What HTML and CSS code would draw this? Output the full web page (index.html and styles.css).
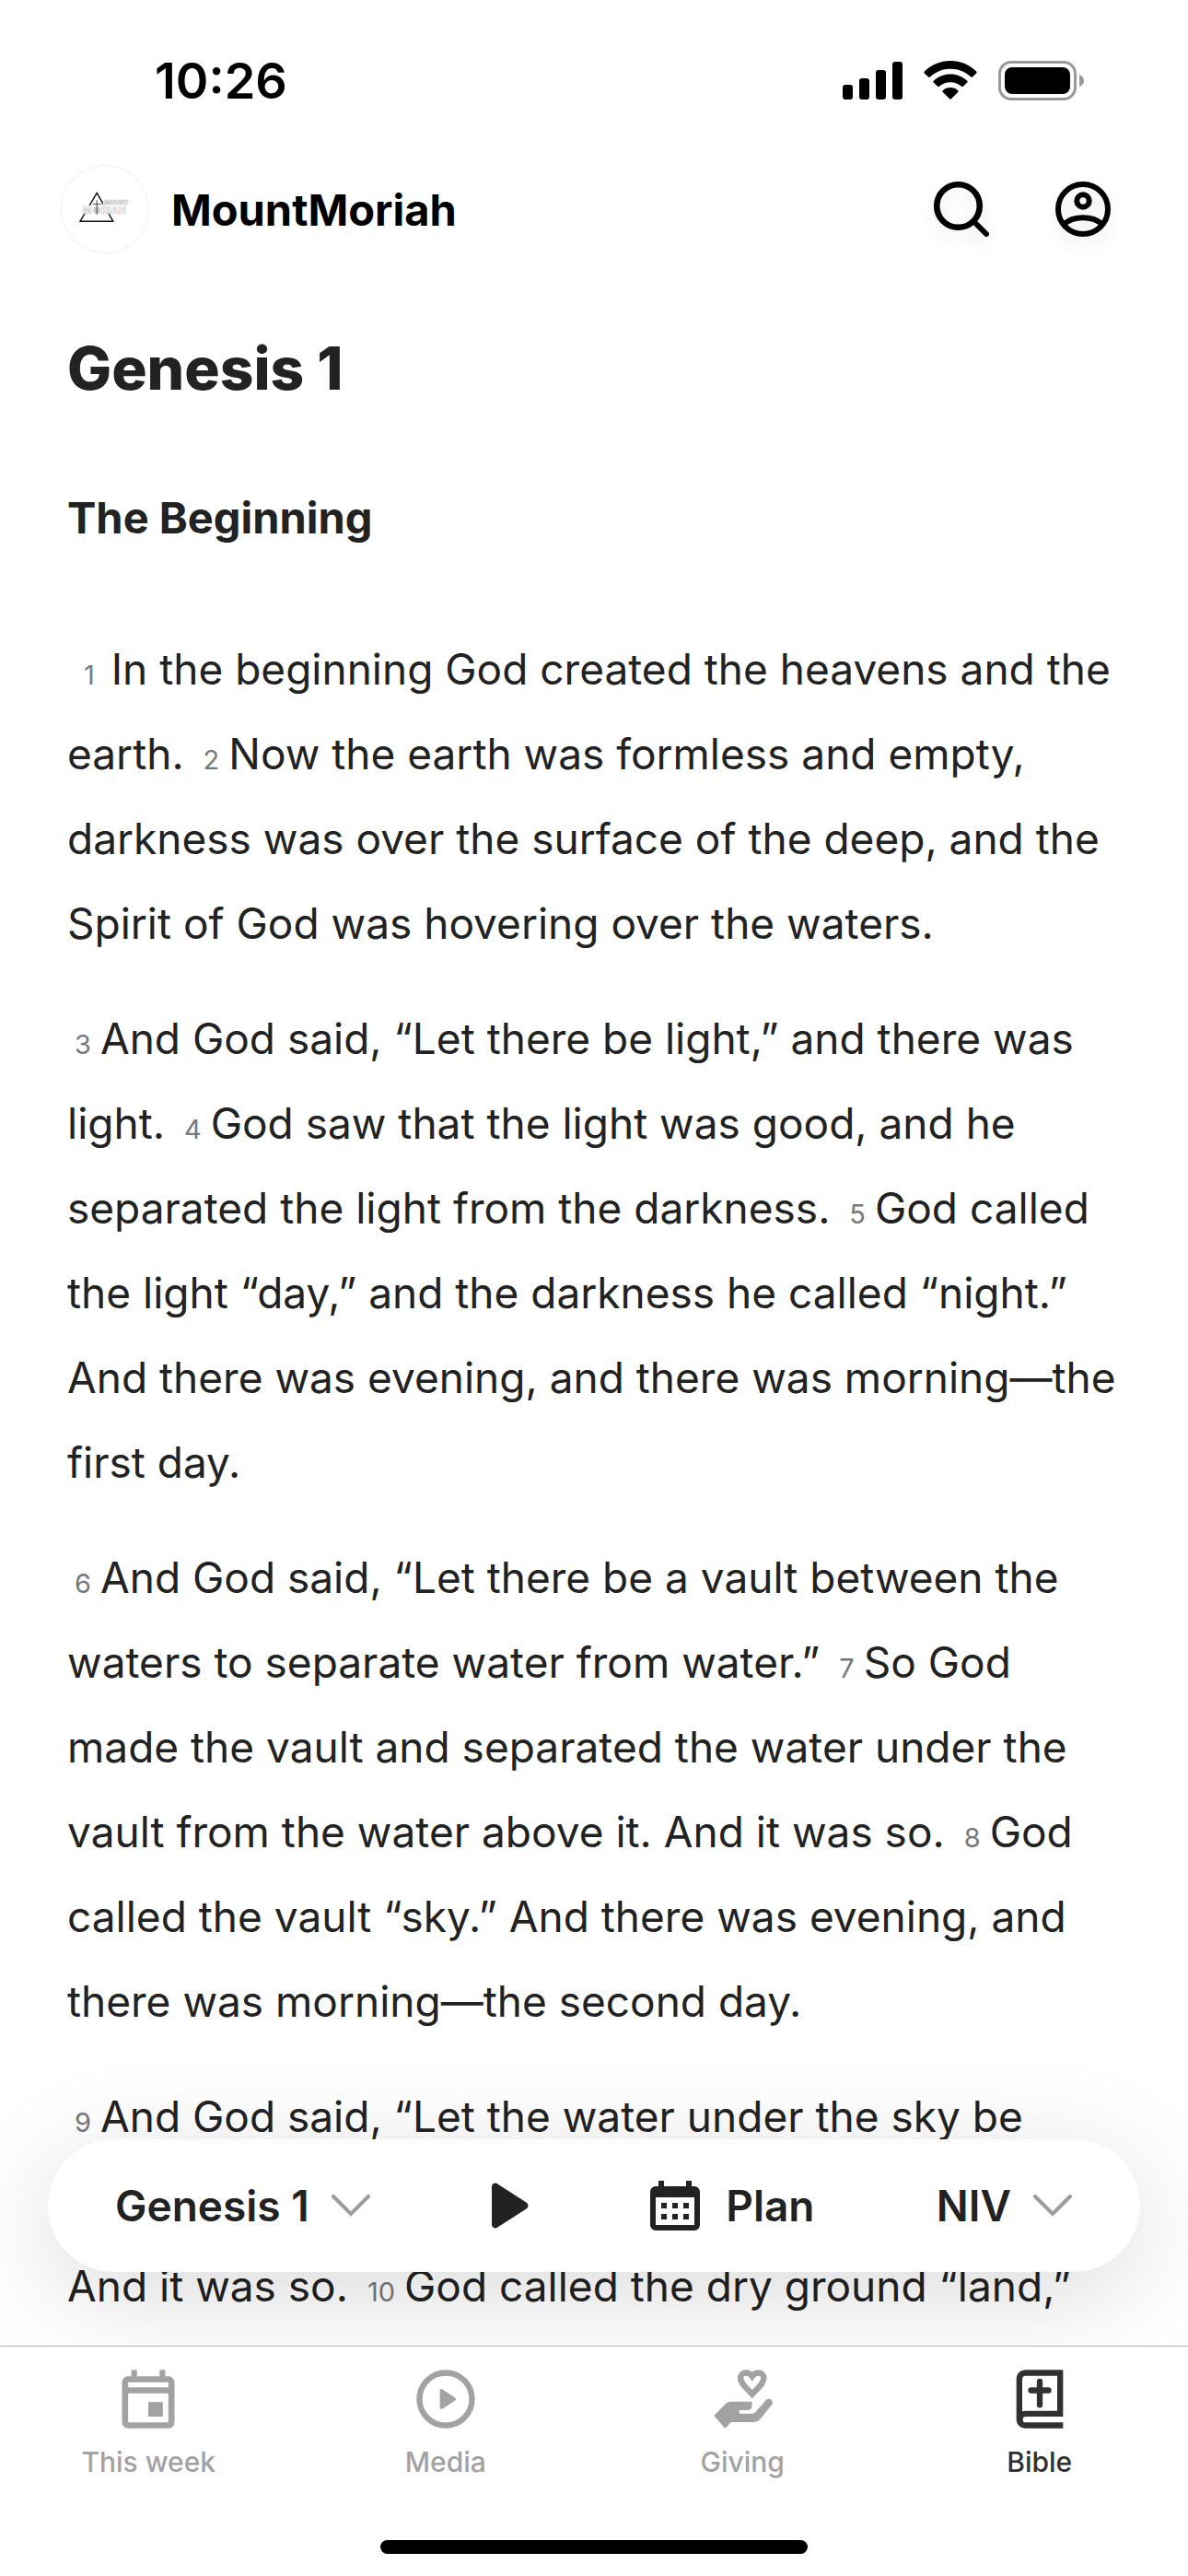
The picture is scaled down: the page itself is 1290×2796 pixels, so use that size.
FILE: index.html
```html
<!DOCTYPE html>
<html lang="en">
  <head>
    <meta charset="UTF-8" />
    <meta name="viewport" content="width=device-width, initial-scale=1.0" />
    <title>MountMoriah - Genesis 1</title>
    <link rel="stylesheet" href="styles.css">
  </head>
  <body>
    <div class="status-bar">
      <span class="time">10:26</span>
      <div class="status-icons">
        <svg width="65" height="42" viewBox="0 0 65 42">
          <rect x="0" y="26" width="11" height="16" rx="3" />
          <rect x="18" y="19" width="11" height="23" rx="3" />
          <rect x="36" y="10" width="11" height="32" rx="3" />
          <rect x="54" y="1" width="11" height="41" rx="3" />
        </svg>
        <svg width="58" height="42" viewBox="0 0 58 42">
          <path d="M29 0C18 0 8 4.500 .8 11.400q-.9 1 0 2L5 17.500q.9.800 1.800 0C12.700 12 20.500 8.800 29 8.800s16.300 3.200 22.200 8.700q.9.800 1.800 0l4.200-4.100q.9-1 0-2C50 4.500 40 0 29 0z" />
          <path d="M29 14.500c-7 0-13.400 2.700-18.200 7.200q-.9.900 0 1.900l4.300 4.200q.9.800 1.800 0C20.100 25 24.300 23.200 29 23.200S37.900 25 41.100 27.800q.9.800 1.800 0l4.300-4.200q.9-1 0-1.900C42.400 17.200 36 14.500 29 14.500z" />
          <path d="M29 29c-3.200 0-6 1.200-8.200 3.200q-.9.900 0 1.800l7.300 7.300q.9.800 1.800 0l7.300-7.300q.9-.9 0-1.800C35 30.200 32.200 29 29 29z" />
        </svg>
        <svg width="94" height="43" viewBox="0 0 94 43">
          <rect x="1.500" y="1.500" width="82" height="40" rx="12.500" fill="none" stroke="#999" stroke-width="3" />
          <rect x="7" y="7" width="71" height="29" rx="8" />
          <path d="M88 15c3 1 5 3.500 5 6.500s-2 5.500-5 6.500z" fill="#999" />
        </svg>
      </div>
    </div>

    <header class="header">
      <a href="#" class="brand">
        <svg class="logo" viewBox="0 0 96 96">
          <path d="M39 30 20.500 61.500h36.500z" fill="none" stroke="#111" stroke-width="1.500" />
          <path d="M24 44h54v9H24zM46 38h32v6H46z" fill="#fff" />
          <circle cx="39" cy="49" r="4" fill="#ccc" />
          <path d="M39 38v16M34.500 42.500h9" stroke="#444" stroke-width="1" />
          <text x="47" y="43" font-size="7" class="logo-text">MOUNT</text>
          <text x="23" y="53" font-size="11" class="logo-text">M</text>
          <text x="44" y="53" font-size="11" class="logo-text">RIAH</text>
        </svg>
        <span class="brand-name">MountMoriah</span>
      </a>
      <div class="header-actions">
        <button class="icon-button" aria-label="Search">
          <svg viewBox="0 0 60 60">
            <circle cx="26.500" cy="26.500" r="23.300" stroke-width="6.600" />
            <path d="M44 44l13 13" />
          </svg>
        </button>
        <button class="icon-button" aria-label="Profile">
          <svg viewBox="0 0 60 60">
            <circle cx="30" cy="30" r="27" />
            <circle cx="30" cy="21" r="6.700" />
            <path d="M9.500 46C20 37 40 37 50.500 46" />
          </svg>
        </button>
      </div>
    </header>

    <div class="reader">
      <main class="chapter">
        <h1>Genesis 1</h1>
        <h2>The Beginning</h2>
        <p>&nbsp;<sub class="verse first">1</sub>&nbsp;In the beginning God created the heavens and the earth. <sub class="verse">2</sub>Now the earth was formless and empty, darkness was over the surface of the deep, and the Spirit of God was hovering over the waters.</p>
        <p><sub class="verse">3</sub>And God said, “Let there be light,” and there was light. <sub class="verse">4</sub>God saw that the light was good, and he separated the light from the darkness. <sub class="verse">5</sub>God called the light “day,” and the darkness he called “night.” And there was evening, and there was morning—the first day.</p>
        <p><sub class="verse">6</sub>And God said, “Let there be a vault between the waters to separate water from water.” <sub class="verse">7</sub>So God made the vault and separated the water under the vault from the water above it. And it was so. <sub class="verse">8</sub>God called the vault “sky.” And there was evening, and there was morning—the second day.</p>
        <p><sub class="verse">9</sub>And God said, “Let the water under the sky be gathered to one place, and let dry ground appear.” And it was so. <sub class="verse">10</sub>God called the dry ground “land,”</p>
      </main>

      <div class="toolbar">
        <button class="tool">
          Genesis 1
          <svg class="chevron" viewBox="0 0 42 24"><path d="M2 2l19 19L40 2" /></svg>
        </button>
        <button class="tool" aria-label="Play">
          <svg width="40" height="50" viewBox="0 0 40 50">
            <path d="M0 4.500C0 1.200 3.600-.6 6.300 1.400L37.500 21.500c2.600 1.800 2.600 5.200 0 7L6.300 48.600C3.600 50.600 0 48.800 0 45.500z" />
          </svg>
        </button>
        <button class="tool plan">
          <svg width="54" height="54" viewBox="0 0 54 54">
            <path fill-rule="evenodd" d="M9 0h6v6h24V0h6v6h3a6 6 0 0 1 6 6v36a6 6 0 0 1-6 6H6a6 6 0 0 1-6-6V12a6 6 0 0 1 6-6h3zM6 18v30h42V18z" />
            <path d="M12 24h6v6h-6zM24 24h6v6h-6zM36 24h6v6h-6zM12 36h6v6h-6zM24 36h6v6h-6zM36 36h6v6h-6z" />
          </svg>
          Plan
        </button>
        <button class="tool">
          NIV
          <svg class="chevron" viewBox="0 0 42 24"><path d="M2 2l19 19L40 2" /></svg>
        </button>
      </div>
    </div>

    <footer class="footer">
      <nav class="tabs">
        <a href="#" class="tab">
          <svg viewBox="0 0 24 24">
            <path fill-rule="evenodd" d="M6.200 2h1.900v2.200h7.800V2h1.900v2.200H19a2 2 0 0 1 2 2V20a2 2 0 0 1-2 2H5a2 2 0 0 1-2-2V6.200a2 2 0 0 1 2-2h1.200zM5.100 6.200V8h13.800V6.200zM5.100 10v10h13.800V10z" />
            <path d="M12 13h5v5h-5z" />
          </svg>
          This week
        </a>
        <a href="#" class="tab">
          <svg viewBox="0 0 24 24">
            <circle cx="12" cy="12" r="9" fill="none" stroke="currentColor" stroke-width="2" />
            <path d="M10 9.200c0-.6.500-.8.900-.5l4.300 2.800q.6.500 0 1l-4.300 2.800c-.4.300-.9.100-.9-.5z" />
          </svg>
          Media
        </a>
        <a href="#" class="tab">
          <svg viewBox="0 0 24 24">
            <path d="M17 10.300c-2-2.100-4-3.800-4-5.600C13 3.700 13.800 3 14.800 3c.9 0 1.700.5 2.200 1.200C17.500 3.500 18.300 3 19.200 3c1 0 1.800.700 1.800 1.700 0 1.800-2 3.500-4 5.600z" fill="none" stroke="currentColor" stroke-width="2" transform="translate(-1.600 0)" />
            <path d="M2.300 17.700l4-4.100q.8-.7 1.800-.7h7.200v1.400q0 1.500-1.500 1.500h-2.300q-.6 0-.6.600t.6.600h3.900q.6 0 1-.4l3.700-4.200c.6-.7 1.400-.6 1.900-.1s.6 1.100.1 1.700l-4.100 5q-.8.900-1.900.9H8.200L6.100 22z" />
          </svg>
          Giving
        </a>
        <a href="#" class="tab active">
          <svg viewBox="0 0 24 24">
            <path d="M20 22H7a3 3 0 0 1-3-3V5a3 3 0 0 1 3-3h13v16H7.200a1 1 0 0 0 0 2H20zM6 16.200q.6-.2 1.200-.2H18V4H7.200Q6 4 6 5.200z" fill-rule="evenodd" />
            <path d="M12 6v8M9 9h6" fill="none" stroke="currentColor" stroke-width="2" stroke-linecap="round" />
          </svg>
          Bible
        </a>
      </nav>
      <div class="home-indicator"></div>
    </footer>
  </body>
</html>
```
FILE: styles.css
```css
* {
  box-sizing: border-box;
}
body {
  margin: 0;
  height: 100vh;
  display: flex;
  flex-direction: column;
  overflow: hidden;
  background-color: #fff;
  color: #222;
  font-family: Inter, "Liberation Sans", sans-serif;
}
svg {
  display: block;
  flex-shrink: 0;
}
a {
  color: inherit;
  text-decoration: none;
}
button {
  padding: 0;
  border: none;
  background: none;
  color: inherit;
  font: inherit;
  cursor: pointer;
}

/* status bar */
.status-bar {
  display: flex;
  justify-content: space-between;
  align-items: center;
  height: 174px;
  padding: 0 112px 0 168px;
  color: #000;
}
.time {
  font-size: 54px;
  font-weight: 600;
}
.status-icons {
  display: flex;
  align-items: center;
  gap: 23px;
}

/* header */
.header {
  display: flex;
  justify-content: space-between;
  align-items: center;
  height: 106px;
  padding: 0 84px 0 66px;
  color: #000;
}
.brand {
  display: flex;
  align-items: center;
  gap: 24px;
}
.logo {
  width: 96px;
  height: 96px;
  border: 1px solid #eee;
  border-radius: 50%;
}
.logo-text {
  fill: #fff;
  stroke: #bbb;
  stroke-width: 0.6px;
  font-weight: 800;
}
.brand-name {
  font-size: 47px;
  font-weight: 700;
}
.header-actions {
  display: flex;
  gap: 72px;
}
.icon-button svg {
  width: 60px;
  height: 60px;
  overflow: visible;
  fill: none;
  stroke: #000;
  stroke-width: 6px;
  stroke-linecap: round;
  filter: drop-shadow(0 9px 9px rgba(0, 0, 0, 0.08));
}

/* chapter text */
.reader {
  position: relative;
  flex: 1;
  min-height: 0;
  overflow: hidden;
}
.chapter {
  padding: 80px 60px 0 73px;
}
h1 {
  margin: 0;
  font-size: 64px;
  font-weight: 800;
  line-height: 80px;
}
h2 {
  margin: 92px 0 88px;
  font-size: 47px;
  font-weight: 700;
  line-height: 60px;
}
p {
  margin: 0 0 33px;
  font-size: 46px;
  line-height: 92px;
}
.verse {
  margin: 0 10px 0 8px;
  color: #77777c;
  font-size: 29px;
  line-height: 1;
  vertical-align: baseline;
}
.verse.first {
  margin: 0 5px;
}

/* floating toolbar */
.toolbar {
  position: absolute;
  left: 52px;
  right: 52px;
  bottom: 80px;
  display: flex;
  justify-content: space-between;
  align-items: center;
  height: 144px;
  padding: 0 74px 0 73px;
  border-radius: 72px;
  background-color: #fff;
  box-shadow: 0 24px 120px rgba(0, 0, 0, 0.15);
}
.tool {
  display: flex;
  align-items: center;
  gap: 24px;
  font-size: 46px;
  font-weight: 600;
}
.tool svg {
  fill: #222;
}
.plan {
  gap: 28px;
}
.tool .chevron {
  width: 42px;
  height: 24px;
  fill: none;
  stroke: #9b9ba0;
  stroke-width: 4px;
  stroke-linecap: round;
}

/* bottom tabs */
.footer {
  display: flex;
  flex-direction: column;
  justify-content: space-between;
  align-items: center;
  height: 250px;
  padding: 19px 0 24px;
  border-top: 1px solid #b0b0b0;
  background-color: #fff;
}
.tabs {
  display: grid;
  grid-template-columns: repeat(4, 1fr);
  width: 100%;
}
.tab {
  display: flex;
  flex-direction: column;
  align-items: center;
  gap: 12px;
  color: #a2a2a2;
  font-size: 30px;
  font-weight: 500;
  line-height: 36px;
}
.tab svg {
  width: 76px;
  height: 76px;
  fill: currentColor;
}
.tab.active {
  color: #303030;
}
.home-indicator {
  width: 36%;
  height: 15px;
  border-radius: 8px;
  background-color: #000;
}
```
